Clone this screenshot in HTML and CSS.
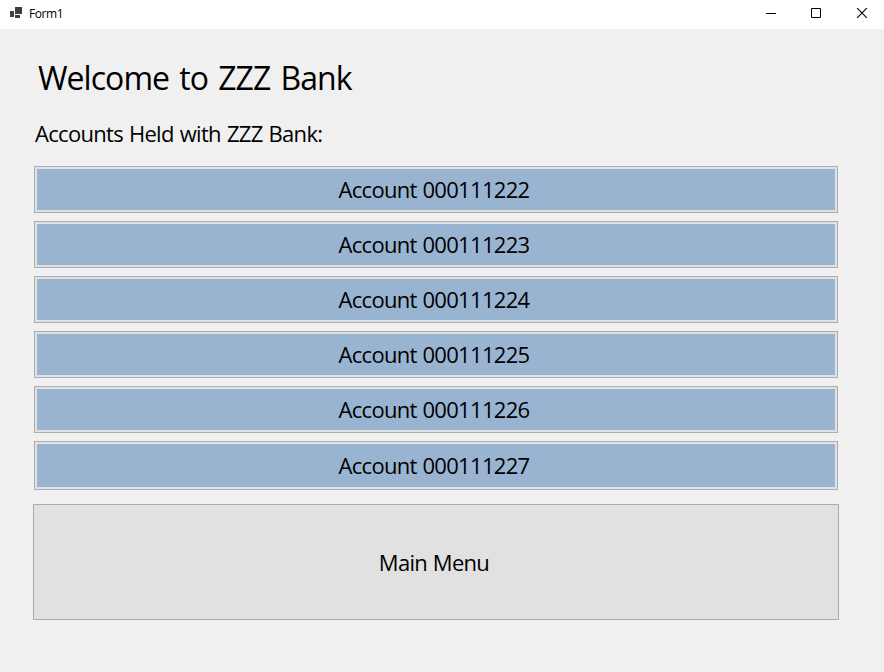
FILE: index.html
```html
<!DOCTYPE html>
<html lang="en">
<head>
<meta charset="utf-8">
<title>Form1</title>
<link rel="stylesheet" href="styles.css">
</head>
<body>
<header class="titlebar">
  <svg class="app-icon" width="14" height="14" viewBox="0 0 14 14" shape-rendering="crispEdges" fill="#3f3f42"><path d="M1 4h4v6H1zM6 0h7v7H6zM6 8h5v3H6z"/></svg>
  <span class="title">Form1</span>
  <div class="controls">
    <svg width="46" height="29" viewBox="0 0 46 29"><path d="M18 13.5h10" stroke="#000"/></svg>
    <svg width="46" height="29" viewBox="0 0 46 29"><path d="M17.5 8.5h9v9h-9z" fill="none" stroke="#000"/></svg>
    <svg width="46" height="29" viewBox="0 0 46 29"><path d="M17.2 8.2l9.6 9.6M26.8 8.2l-9.6 9.6" stroke="#000" stroke-width="1.1"/></svg>
  </div>
</header>
<main class="form">
  <h1 class="heading">Welcome to ZZZ Bank</h1>
  <h2 class="subheading">Accounts Held with ZZZ Bank:</h2>
  <div class="accounts">
    <button class="account"><span>Account 000111222</span></button>
    <button class="account"><span>Account 000111223</span></button>
    <button class="account"><span>Account 000111224</span></button>
    <button class="account"><span>Account 000111225</span></button>
    <button class="account"><span>Account 000111226</span></button>
    <button class="account last"><span>Account 000111227</span></button>
  </div>
  <button class="menu">Main Menu</button>
</main>
</body>
</html>
```
FILE: styles.css
```css
* { box-sizing: border-box; }
body {
  margin: 0;
  height: 672px;
  overflow: hidden;
  background: #f0f0f0;
  color: #000;
  font-family: "Open Sans", "Noto Sans", sans-serif;
}
.titlebar {
  display: flex;
  height: 29px;
  padding-left: 9px;
  background: #fff;
}
.app-icon { margin-top: 7px; }
.title {
  margin-left: 6px;
  font-size: 12px;
  line-height: 28px;
  letter-spacing: -0.4px;
}
.controls { display: flex; margin-left: auto; margin-right: -2px; }
.form { padding: 29px 45px 0 33px; }
.heading, .subheading { margin: 0; font-weight: 380; white-space: nowrap; }
.heading {
  padding-left: 5px;
  font-size: 32px;
  line-height: 40px;
  letter-spacing: -0.95px;
  word-spacing: 2.8px;
}
.subheading {
  margin-top: 20px;
  padding-left: 2px;
  font-size: 22px;
  line-height: 30px;
  letter-spacing: -0.7px;
  word-spacing: 1px;
}
.accounts {
  display: flex;
  flex-direction: column;
  gap: 8px;
  margin: 18px 1px 14px;
}
button {
  margin: 0;
  border: 1px solid #adadad;
  border-radius: 0;
  background: #e1e1e1;
  color: #000;
  font: 380 22px/30px "Open Sans", "Noto Sans", sans-serif;
  letter-spacing: -0.68px;
  word-spacing: 0.6px;
}
.account { display: flex; height: 47px; padding: 2px; }
.account span {
  flex: 1;
  align-self: stretch;
  padding: 5px 4px 0 0;
  background: #99b4d1;
}
.last { height: 49px; }
.last span { padding-top: 6px; }
.menu {
  display: block;
  width: 806px;
  height: 116px;
  padding: 0 4px 0 0;
}
```
